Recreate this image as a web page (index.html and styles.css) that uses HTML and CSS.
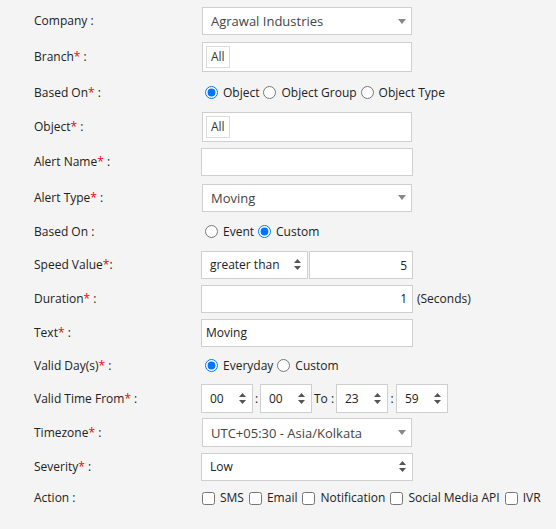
FILE: index.html
```html
<!DOCTYPE html>
<html>
<head>
<meta charset="utf-8">
<link rel="stylesheet" href="styles.css">
</head>
<body>
<div class="form">
  <div class="row h36">
    <div class="label">Company :</div>
    <div class="chosen"><span>Agrawal Industries</span><svg class="tri" width="8" height="5" viewBox="0 0 8 5"><polygon points="0,0 8,0 4,5" fill="#888"/></svg></div>
  </div>
  <div class="row h36">
    <div class="label">Branch<span class="req">*</span> :</div>
    <div class="tagbox"><span class="tag">All</span></div>
  </div>
  <div class="row h35">
    <div class="label">Based On<span class="req">*</span> :</div>
    <div class="opts">
      <input type="radio" name="b1" checked><span class="opt">Object</span>
      <input type="radio" name="b1"><span class="opt">Object Group</span>
      <input type="radio" name="b1"><span class="opt">Object Type</span>
    </div>
  </div>
  <div class="row h34">
    <div class="label">Object<span class="req">*</span> :</div>
    <div class="tagbox"><span class="tag">All</span></div>
  </div>
  <div class="row h36">
    <div class="label">Alert Name<span class="req">*</span> :</div>
    <div class="input"></div>
  </div>
  <div class="row h35">
    <div class="label">Alert Type<span class="req">*</span> :</div>
    <div class="chosen"><span>Moving</span><svg class="tri" width="8" height="5" viewBox="0 0 8 5"><polygon points="0,0 8,0 4,5" fill="#888"/></svg></div>
  </div>
  <div class="row h33">
    <div class="label">Based On :</div>
    <div class="opts">
      <input type="radio" name="b2"><span class="opt">Event</span>
      <input type="radio" name="b2" checked><span class="opt">Custom</span>
    </div>
  </div>
  <div class="row h33">
    <div class="label">Speed Value<span class="req">*</span>:</div>
    <div class="ctrls">
      <div class="select speed"><span>greater than</span><svg width="7" height="11" viewBox="0 0 7 11"><polygon points="0,4 3.5,0 7,4" fill="#555"/><polygon points="0,7 3.5,11 7,7" fill="#555"/></svg></div>
      <div class="input num">5</div>
    </div>
  </div>
  <div class="row h35">
    <div class="label">Duration<span class="req">*</span> :</div>
    <div class="ctrls">
      <div class="input right">1</div>
      <span class="unit">(Seconds)</span>
    </div>
  </div>
  <div class="row h33">
    <div class="label">Text<span class="req">*</span> :</div>
    <div class="input">Moving</div>
  </div>
  <div class="row h33">
    <div class="label">Valid Day(s)<span class="req">*</span> :</div>
    <div class="opts">
      <input type="radio" name="b3" checked><span class="opt">Everyday</span>
      <input type="radio" name="b3"><span class="opt">Custom</span>
    </div>
  </div>
  <div class="row h33">
    <div class="label">Valid Time From<span class="req">*</span> :</div>
    <div class="ctrls">
      <div class="spin"><span>00</span><svg width="7" height="11" viewBox="0 0 7 11"><polygon points="0,4 3.5,0 7,4" fill="#555"/><polygon points="0,7 3.5,11 7,7" fill="#555"/></svg></div>
      <span class="sep">:</span>
      <div class="spin"><span>00</span><svg width="7" height="11" viewBox="0 0 7 11"><polygon points="0,4 3.5,0 7,4" fill="#555"/><polygon points="0,7 3.5,11 7,7" fill="#555"/></svg></div>
      <span class="sep to">To :</span>
      <div class="spin"><span>23</span><svg width="7" height="11" viewBox="0 0 7 11"><polygon points="0,4 3.5,0 7,4" fill="#555"/><polygon points="0,7 3.5,11 7,7" fill="#555"/></svg></div>
      <span class="sep wide">:</span>
      <div class="spin"><span>59</span><svg width="7" height="11" viewBox="0 0 7 11"><polygon points="0,4 3.5,0 7,4" fill="#555"/><polygon points="0,7 3.5,11 7,7" fill="#555"/></svg></div>
    </div>
  </div>
  <div class="row h35">
    <div class="label">Timezone<span class="req">*</span> :</div>
    <div class="chosen tz"><span>UTC+05:30 - Asia/Kolkata</span><svg class="tri" width="8" height="5" viewBox="0 0 8 5"><polygon points="0,0 8,0 4,5" fill="#888"/></svg></div>
  </div>
  <div class="row h33">
    <div class="label">Severity<span class="req">*</span> :</div>
    <div class="select sev"><span>Low</span><svg width="7" height="11" viewBox="0 0 7 11"><polygon points="0,4 3.5,0 7,4" fill="#555"/><polygon points="0,7 3.5,11 7,7" fill="#555"/></svg></div>
  </div>
  <div class="row h30">
    <div class="label">Action :</div>
    <div class="checks">
      <input type="checkbox"><span class="opt">SMS</span>
      <input type="checkbox"><span class="opt">Email</span>
      <input type="checkbox"><span class="opt">Notification</span>
      <input type="checkbox"><span class="opt">Social Media API</span>
      <input type="checkbox"><span class="opt">IVR</span>
    </div>
  </div>
</div>
</body>
</html>
```
FILE: styles.css
```css
html, body {
  margin: 0;
  padding: 0;
  background: #f4f4f4;
}
body {
  font-family: "Open Sans", "Liberation Sans", sans-serif;
  font-size: 12px;
  color: #222;
  width: 556px;
  height: 529px;
  overflow: hidden;
}
.form {
  padding: 3px 0 0 34px;
  display: flex;
  flex-direction: column;
}
.row {
  display: flex;
  align-items: center;
}
.h36 { height: 36px; }
.h35 { height: 35px; }
.h34 { height: 34px; }
.h33 { height: 33px; }
.h30 { height: 30px; }
.label {
  width: 167px;
  flex: none;
  line-height: 16px;
}
.req { color: #ff0000; }
.chosen {
  box-sizing: border-box;
  width: 210px;
  height: 28px;
  margin-left: 1px;
  background: #fff;
  border: 1px solid #cfcfcf;
  display: flex;
  align-items: center;
  justify-content: space-between;
  padding: 0 5px 0 8px;
  font-size: 13px;
  color: #444;
}
.chosen.tz { height: 29px; }
.tagbox {
  box-sizing: border-box;
  width: 210px;
  height: 30px;
  margin-left: 1px;
  background: #fff;
  border: 1px solid #cfcfcf;
  padding: 3px;
  display: flex;
  align-items: flex-start;
}
.tag {
  box-sizing: border-box;
  height: 22px;
  line-height: 20px;
  border: 1px solid #dcdcdc;
  padding: 0 4px;
  color: #333;
  background: #fff;
}
.input {
  box-sizing: border-box;
  width: 212px;
  height: 28px;
  background: #fff;
  border: 1px solid #cfcfcf;
  display: flex;
  align-items: center;
  padding: 0 5px 0 4px;
  color: #222;
}
.input.right { justify-content: flex-end; }
.input.num {
  width: 104px;
  margin-left: 1px;
  justify-content: flex-end;
  margin-top: 1px;
}
.ctrls {
  display: flex;
  align-items: center;
}
.unit {
  margin-left: 4px;
  color: #222;
}
.select {
  box-sizing: border-box;
  height: 28px;
  background: #fff;
  border: 1px solid #cfcfcf;
  display: flex;
  align-items: center;
  justify-content: space-between;
  padding: 0 6px 0 8px;
  color: #222;
}
.select.speed { width: 107px; }
.select.sev { width: 212px; }
.spin {
  box-sizing: border-box;
  width: 52px;
  height: 29px;
  background: #fff;
  border: 1px solid #cfcfcf;
  display: flex;
  align-items: center;
  justify-content: space-between;
  padding: 0 6px 0 8px;
  color: #222;
}
.sep {
  width: 7px;
  text-align: center;
}
.sep.to { width: 24px; }
.sep.wide { width: 8px; }
.opts, .checks {
  display: flex;
  align-items: center;
}
.opts input[type="radio"] {
  width: 13px;
  height: 13px;
  margin: 0 5px 0 4px;
}
.checks input[type="checkbox"] {
  width: 13px;
  height: 13px;
  margin: 0 5px 0 5px;
}
.checks input[type="checkbox"]:first-child { margin-left: 1px; }
.opt { line-height: 16px; }
```
